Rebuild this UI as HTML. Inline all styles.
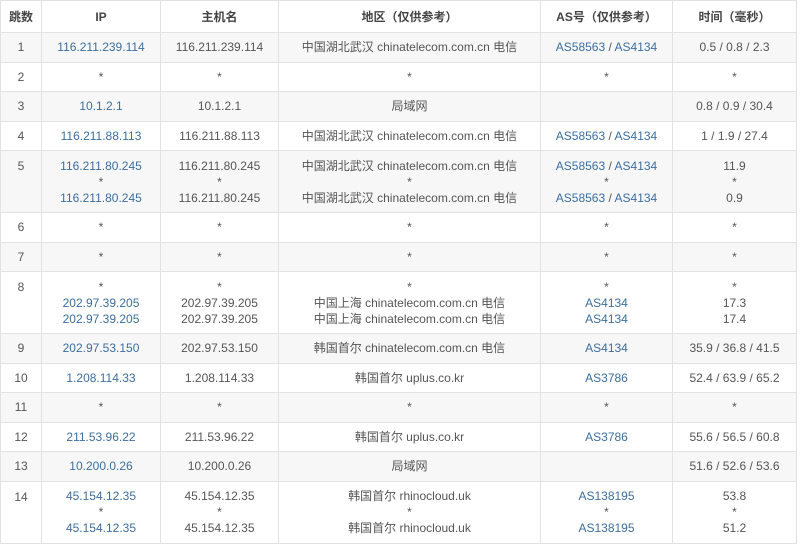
<!DOCTYPE html>
<html><head><meta charset="utf-8"><style>
body{margin:0;background:#fff;}
table{border-collapse:collapse;position:absolute;left:0;top:0;width:796px;table-layout:fixed;font-family:"Liberation Sans","Noto Sans CJK SC",sans-serif;font-size:12px;color:#555;}
td,th{border:1px solid #e2e2e2;text-align:center;vertical-align:middle;padding:0;line-height:16px;}
th{font-weight:bold;color:#444;height:31px;}
tr.o td{background:#f7f7f7;}
tr.t td.n{vertical-align:top;}
tr.t td.n span{display:block;margin-top:7px;}
.a{color:#3d6e9e;}
.g{color:#555;}
tr.s td{height:28.5px;}
tr.t td{height:61px;}
</style></head><body>
<table>
<colgroup><col style="width:41px"><col style="width:119px"><col style="width:118px"><col style="width:262px"><col style="width:132px"><col style="width:124px"></colgroup>
<tr><th>跳数</th><th>IP</th><th>主机名</th><th>地区（仅供参考）</th><th>AS号（仅供参考）</th><th>时间（毫秒）</th></tr>
<tr class="s o"><td class="n">1</td><td class="a">116.211.239.114</td><td>116.211.239.114</td><td>中国湖北武汉 chinatelecom.com.cn 电信</td><td><span class="a">AS58563</span> / <span class="a">AS4134</span></td><td>0.5 / 0.8 / 2.3</td></tr>
<tr class="s"><td class="n">2</td><td>*</td><td>*</td><td>*</td><td>*</td><td>*</td></tr>
<tr class="s o"><td class="n">3</td><td class="a">10.1.2.1</td><td>10.1.2.1</td><td>局域网</td><td></td><td>0.8 / 0.9 / 30.4</td></tr>
<tr class="s"><td class="n">4</td><td class="a">116.211.88.113</td><td>116.211.88.113</td><td>中国湖北武汉 chinatelecom.com.cn 电信</td><td><span class="a">AS58563</span> / <span class="a">AS4134</span></td><td>1 / 1.9 / 27.4</td></tr>
<tr class="t o"><td class="n"><span>5</span></td><td class="a">116.211.80.245<br><span class="g">*</span><br>116.211.80.245</td><td>116.211.80.245<br>*<br>116.211.80.245</td><td>中国湖北武汉 chinatelecom.com.cn 电信<br>*<br>中国湖北武汉 chinatelecom.com.cn 电信</td><td><span class="a">AS58563</span> / <span class="a">AS4134</span><br>*<br><span class="a">AS58563</span> / <span class="a">AS4134</span></td><td>11.9<br>*<br>0.9</td></tr>
<tr class="s"><td class="n">6</td><td>*</td><td>*</td><td>*</td><td>*</td><td>*</td></tr>
<tr class="s o"><td class="n">7</td><td>*</td><td>*</td><td>*</td><td>*</td><td>*</td></tr>
<tr class="t"><td class="n"><span>8</span></td><td class="a"><span class="g">*</span><br>202.97.39.205<br>202.97.39.205</td><td>*<br>202.97.39.205<br>202.97.39.205</td><td>*<br>中国上海 chinatelecom.com.cn 电信<br>中国上海 chinatelecom.com.cn 电信</td><td class="a"><span class="g">*</span><br>AS4134<br>AS4134</td><td>*<br>17.3<br>17.4</td></tr>
<tr class="s o"><td class="n">9</td><td class="a">202.97.53.150</td><td>202.97.53.150</td><td>韩国首尔 chinatelecom.com.cn 电信</td><td class="a">AS4134</td><td>35.9 / 36.8 / 41.5</td></tr>
<tr class="s"><td class="n">10</td><td class="a">1.208.114.33</td><td>1.208.114.33</td><td>韩国首尔 uplus.co.kr</td><td class="a">AS3786</td><td>52.4 / 63.9 / 65.2</td></tr>
<tr class="s o"><td class="n">11</td><td>*</td><td>*</td><td>*</td><td>*</td><td>*</td></tr>
<tr class="s"><td class="n">12</td><td class="a">211.53.96.22</td><td>211.53.96.22</td><td>韩国首尔 uplus.co.kr</td><td class="a">AS3786</td><td>55.6 / 56.5 / 60.8</td></tr>
<tr class="s o"><td class="n">13</td><td class="a">10.200.0.26</td><td>10.200.0.26</td><td>局域网</td><td></td><td>51.6 / 52.6 / 53.6</td></tr>
<tr class="t"><td class="n"><span>14</span></td><td class="a">45.154.12.35<br><span class="g">*</span><br>45.154.12.35</td><td>45.154.12.35<br>*<br>45.154.12.35</td><td>韩国首尔 rhinocloud.uk<br>*<br>韩国首尔 rhinocloud.uk</td><td class="a">AS138195<br><span class="g">*</span><br>AS138195</td><td>53.8<br>*<br>51.2</td></tr>
</table>
</body></html>
